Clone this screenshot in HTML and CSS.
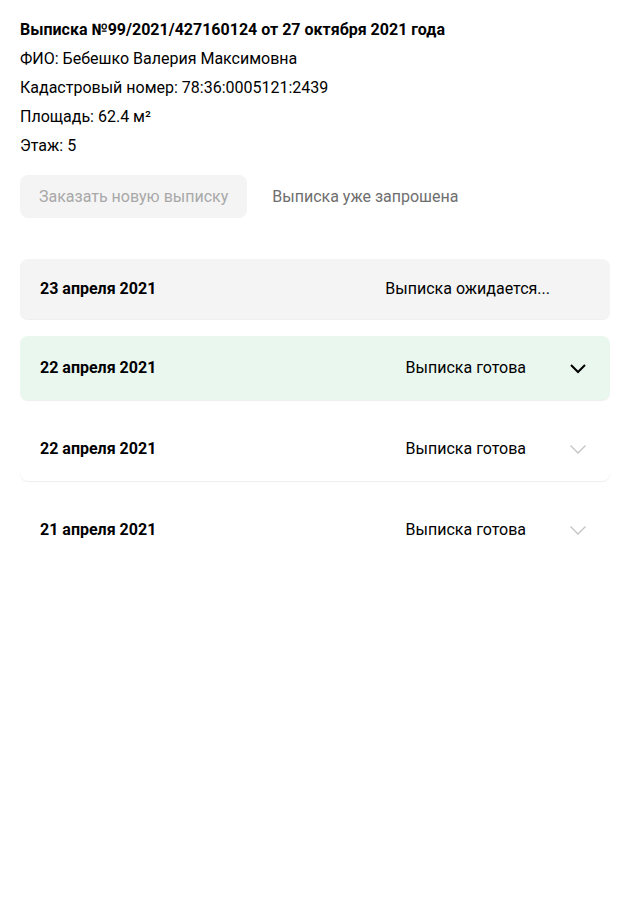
FILE: index.html
```html
<!DOCTYPE html>
<html lang="ru"><head><meta charset="utf-8"><link rel="stylesheet" href="styles.css"></head>
<body>
<main class="page">
  <section class="info">
    <h1 class="title">Выписка №99/2021/427160124 от 27 октября 2021 года</h1>
    <p class="line">ФИО: Бебешко Валерия Максимовна</p>
    <p class="line">Кадастровый номер: 78:36:0005121:2439</p>
    <p class="line">Площадь: 62.4 м²</p>
    <p class="line">Этаж: 5</p>
  </section>
  <div class="actions">
    <button class="btn" disabled>Заказать новую выписку</button>
    <span class="note">Выписка уже запрошена</span>
  </div>
  <ul class="list">
    <li class="card card-pending">
      <span class="date">23 апреля 2021</span>
      <span class="status status-wait">Выписка ожидается...</span>
    </li>
    <li class="card card-active">
      <span class="date">22 апреля 2021</span>
      <span class="status">Выписка готова</span>
      <svg class="chev chev-dark" width="24" height="24" viewBox="0 0 24 24"><path d="M5 9l7 7 7-7" fill="none" stroke="currentColor" stroke-width="2"/></svg>
    </li>
    <li class="card">
      <span class="date">22 апреля 2021</span>
      <span class="status">Выписка готова</span>
      <svg class="chev" width="24" height="24" viewBox="0 0 24 24"><path d="M4.5 8.5l7.5 7.5 7.5-7.5" fill="none" stroke="currentColor" stroke-width="1.3"/></svg>
    </li>
    <li class="card card-last">
      <span class="date">21 апреля 2021</span>
      <span class="status">Выписка готова</span>
      <svg class="chev" width="24" height="24" viewBox="0 0 24 24"><path d="M4.5 8.5l7.5 7.5 7.5-7.5" fill="none" stroke="currentColor" stroke-width="1.3"/></svg>
    </li>
  </ul>
</main>
</body></html>
```
FILE: styles.css
```css
*{box-sizing:border-box}
body{margin:0;background:#fff;font-family:Roboto,"Noto Sans",sans-serif;font-size:16px;color:#000}
.page{padding:15px 20px 20px}
.info{display:flex;flex-direction:column}
.title{margin:0;font-size:16px;font-weight:700;line-height:29px}
.line{margin:0;line-height:29px}
.actions{display:flex;align-items:center;gap:25px;margin-top:15px}
.btn{height:43px;padding:0 19px;border:0;border-radius:8px;background:#f4f4f4;color:#a8a8a8;font-family:inherit;font-size:16px}
.note{color:#6e6e6e;font-size:16px;line-height:20px;padding-top:1px}
.list{list-style:none;margin:41px 0 0;padding:0;display:flex;flex-direction:column;gap:17px}
.card{display:flex;align-items:center;padding:20px;border-radius:8px;background:#fff;box-shadow:0 1px 1px rgba(0,0,0,.07);min-height:64px}
.card-pending{background:#f4f4f4;min-height:60px}
.card-active{background:#eaf7ef}
.card-last{box-shadow:none}
.date{flex:1;font-weight:700;line-height:20px}
.status{line-height:20px}
.status-wait{margin-right:40px}
.chev{margin-left:40px;color:#c4c4c4;flex:none}
.chev-dark{color:#000}
```
